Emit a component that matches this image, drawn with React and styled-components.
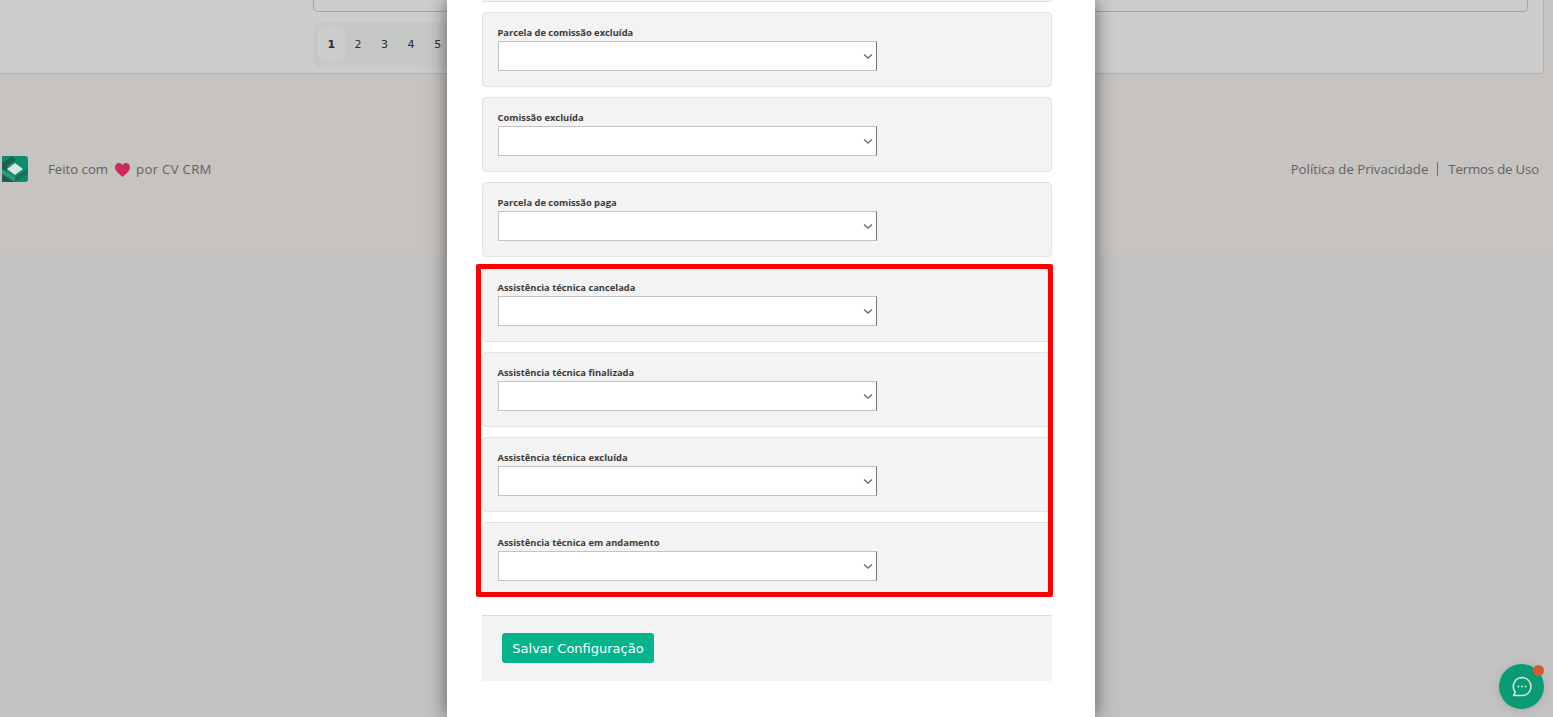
import React from "react";
import styled, { createGlobalStyle } from "styled-components";

const GlobalStyle = createGlobalStyle`
  html, body {
    margin: 0;
    padding: 0;
    height: 100%;
    overflow: hidden;
    background: #c2c2c2;
    font-family: "Open Sans", "Liberation Sans", sans-serif;
  }
  * {
    box-sizing: border-box;
  }
`;

const Page = styled.div`
  position: relative;
  height: 717px;
  overflow: hidden;
  background: #c2c2c2;
`;

const Warm = styled.div`
  height: 254px;
  background: #c7c3c0;
`;

const ListPanel = styled.div`
  height: 74px;
  margin-right: 9px;
  padding-left: 313px;
  padding-right: 15px;
  background: #cdcdcd;
  border-right: 1px solid #b3b3b3;
  border-bottom: 1px solid #b3b3b3;
  border-bottom-right-radius: 4px;
`;

const TableEnd = styled.div`
  height: 12px;
  border: 1px solid #a6a6a6;
  border-top: 0;
  border-radius: 0 0 5px 5px;
`;

const Pagination = styled.div`
  display: inline-flex;
  margin-top: 10px;
  padding: 5px;
  height: 45px;
  background: #c6c8c6;
  border-radius: 7px;
`;

const PageItem = styled.div`
  width: 26.6px;
  height: 34px;
  display: flex;
  align-items: center;
  justify-content: center;
  border-radius: 7px;
  font-family: "DejaVu Sans", sans-serif;
  font-size: 11px;
  color: #2e2e2e;
  font-weight: ${(props) => (props.$active ? 700 : 400)};
  background: ${(props) => (props.$active ? "#cdcdcd" : "transparent")};
`;

const Footer = styled.div`
  height: 180px;
  padding: 10px 14px 0 2px;
  display: flex;
  align-items: center;
  justify-content: space-between;
  font-size: 13.2px;
  color: #626262;
`;

const Made = styled.div`
  display: flex;
  align-items: center;
`;

const MadeText = styled.span`
  margin-left: 20px;
`;

const MakerName = styled.span`
  letter-spacing: 0.3px;
`;

const HeartIcon = styled.svg`
  width: 15px;
  height: 14px;
  margin: 1px 6px 0 7px;
`;

const Links = styled.div`
  display: flex;
  align-items: center;
`;

const Divider = styled.span`
  width: 1px;
  height: 14px;
  margin: 0 10px 0 9px;
  background: #6e6e6e;
`;

const TermsLink = styled.span`
  letter-spacing: -0.15px;
`;

const Modal = styled.div`
  position: absolute;
  top: 0;
  left: 447px;
  width: 648px;
  height: 717px;
  padding: 0 43px 0 35px;
  background: #fff;
  box-shadow: 0 0 18px rgba(0, 0, 0, 0.55);
`;

const CardStub = styled.div`
  height: 2px;
  margin-bottom: 10px;
  background: #f3f3f3;
  border-bottom: 1px solid #e3e3e3;
  border-radius: 0 0 4px 4px;
`;

const Card = styled.div`
  height: 75px;
  margin-bottom: 10px;
  padding: 14px 15px 0 14.5px;
  background: #f3f3f3;
  border: 1px solid #e3e3e3;
  border-radius: 4px;
  &:last-child {
    margin-bottom: 0;
  }
`;

const Label = styled.div`
  font-size: 9.35px;
  line-height: 12px;
  font-weight: 700;
  color: #3a3a3a;
  margin-bottom: 2px;
`;

const SelectBox = styled.div`
  width: 379.5px;
  height: 30px;
  display: flex;
  align-items: center;
  justify-content: flex-end;
  padding-right: 2px;
  background: #fff;
  border: 1px solid #c4c4c4;
  border-right-color: #767676;
`;

const Highlighted = styled.div`
  position: relative;
  margin-bottom: 18px;
`;

const RedFrame = styled.div`
  position: absolute;
  top: -3px;
  left: -6px;
  right: -1px;
  bottom: 0;
  border: 5px solid #ff0000;
  border-radius: 2px;
  pointer-events: none;
`;

const ActionBar = styled.div`
  height: 66px;
  padding: 17px 20px 0;
  background: #f3f3f3;
  border-top: 1px solid #dcdcdc;
`;

const SaveButton = styled.button`
  width: 152px;
  height: 30px;
  padding: 0;
  border: 0;
  border-radius: 3px;
  background: #05b48a;
  color: #fff;
  font-family: "DejaVu Sans", sans-serif;
  font-size: 13px;
  font-weight: 400;
`;

const ChatButton = styled.div`
  position: absolute;
  left: 1499px;
  top: 664px;
  width: 45px;
  height: 45px;
  display: flex;
  align-items: center;
  justify-content: center;
  border-radius: 50%;
  background: #0a9a74;
  box-shadow: 0 1px 8px rgba(0, 0, 0, 0.12);
`;

const ChatDot = styled.span`
  position: absolute;
  top: 1px;
  right: 0;
  width: 11px;
  height: 11px;
  border-radius: 50%;
  background: #d95b2b;
`;

const Chevron = () => (
  <svg width="12" height="12" viewBox="0 0 12 12" fill="none">
    <path d="M2 4.4 L6 8 L10 4.4" stroke="#6e6e6e" strokeWidth="1.4" />
  </svg>
);

const Logo = () => (
  <svg width="26" height="26" viewBox="0 0 26 26">
    <path d="M0 0H23a3 3 0 0 1 3 3V23a3 3 0 0 1-3 3H0Z" fill="#0b8f6b" />
    <path d="M0 7L10 0.5L14 4L5 9.5L5 16L0 13Z" fill="#1a5f50" />
    <path d="M0 13L5 16L13 21L13 26H0Z" fill="#1a5f50" />
    <path d="M0 13L13 21L13 26L0 18Z" fill="#2f9a75" />
    <path d="M13 21L21 16L26 13V18L13 26Z" fill="#1a6f5b" />
    <path d="M13 7L21 13L13 19L5 13Z" fill="#d8e6df" />
  </svg>
);

const Heart = () => (
  <HeartIcon viewBox="0 0 16 15">
    <defs>
      <linearGradient id="heartFill" x1="0" y1="0" x2="0" y2="1">
        <stop offset="0" stopColor="#c02f4a" />
        <stop offset="1" stopColor="#d12a6e" />
      </linearGradient>
    </defs>
    <path
      d="M8 15C4 11.5 0 8.8 0 4.6 0 1.9 2 0 4.2 0 5.8 0 7.2.8 8 2.2 8.8.8 10.2 0 11.8 0 14 0 16 1.9 16 4.6 16 8.8 12 11.5 8 15Z"
      fill="url(#heartFill)"
    />
  </HeartIcon>
);

const ChatIcon = () => (
  <svg width="22" height="22" viewBox="0 0 22 22" fill="none">
    <path
      d="M11 1.6a9 9 0 0 1 0 18H2.6l1.7-3.4A9 9 0 0 1 11 1.6Z"
      stroke="#d5e6e0"
      strokeWidth="1.5"
      strokeLinejoin="round"
    />
    <circle cx="7.4" cy="10.6" r="1" fill="#d5e6e0" />
    <circle cx="11" cy="10.6" r="1" fill="#d5e6e0" />
    <circle cx="14.6" cy="10.6" r="1" fill="#d5e6e0" />
  </svg>
);

const Field = ({ label }) => (
  <Card>
    <Label>{label}</Label>
    <SelectBox>
      <Chevron />
    </SelectBox>
  </Card>
);

const topFields = [
  "Parcela de comissão excluída",
  "Comissão excluída",
  "Parcela de comissão paga",
];

const markedFields = [
  "Assistência técnica cancelada",
  "Assistência técnica finalizada",
  "Assistência técnica excluída",
  "Assistência técnica em andamento",
];

export default function App() {
  return (
    <Page>
      <GlobalStyle />
      <Warm>
        <ListPanel>
          <TableEnd />
          <Pagination>
            {[1, 2, 3, 4, 5].map((n) => (
              <PageItem key={n} $active={n === 1}>
                {n}
              </PageItem>
            ))}
          </Pagination>
        </ListPanel>
        <Footer>
          <Made>
            <Logo />
            <MadeText>Feito com</MadeText>
            <Heart />
            <MakerName>por CV CRM</MakerName>
          </Made>
          <Links>
            <span>Política de Privacidade</span>
            <Divider />
            <TermsLink>Termos de Uso</TermsLink>
          </Links>
        </Footer>
      </Warm>
      <Modal>
        <CardStub />
        {topFields.map((label) => (
          <Field key={label} label={label} />
        ))}
        <Highlighted>
          {markedFields.map((label) => (
            <Field key={label} label={label} />
          ))}
          <RedFrame />
        </Highlighted>
        <ActionBar>
          <SaveButton>Salvar Configuração</SaveButton>
        </ActionBar>
      </Modal>
      <ChatButton>
        <ChatIcon />
        <ChatDot />
      </ChatButton>
    </Page>
  );
}
